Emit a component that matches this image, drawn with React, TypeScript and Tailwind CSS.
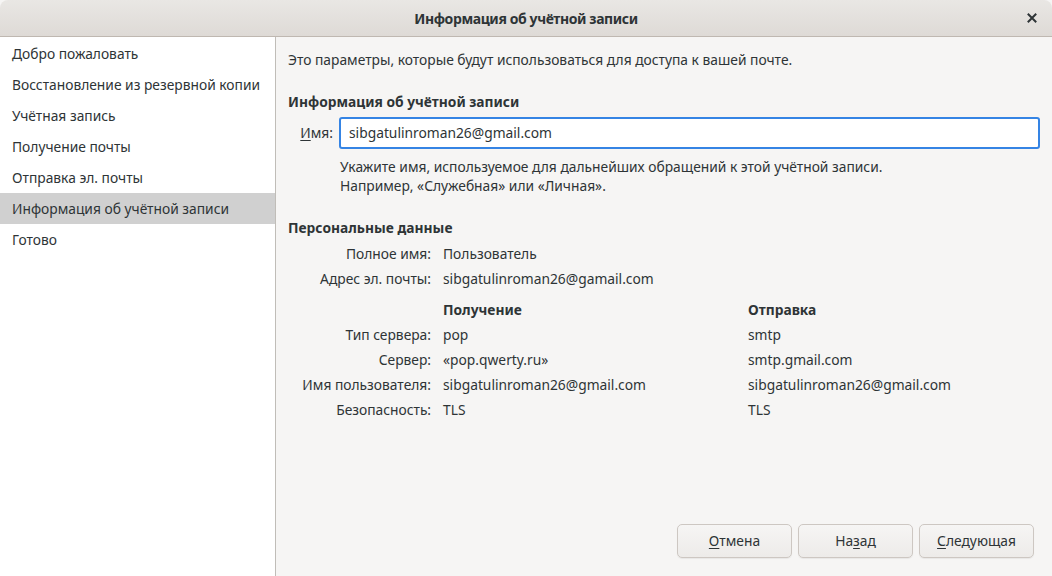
import React from "react";

const font = { fontFamily: '"Noto Sans", "Open Sans", sans-serif' };

function U({ c }: { c: string }) {
  return <span className="underline underline-offset-2">{c}</span>;
}

const side = [
  "Добро пожаловать",
  "Восстановление из резервной копии",
  "Учётная запись",
  "Получение почты",
  "Отправка эл. почты",
  "Информация об учётной записи",
  "Готово",
];

function Row({ a, b, c }: { a: string; b: string; c: string }) {
  return (
    <>
      <div className="h-[25px] flex items-center justify-end">{a}</div>
      <div className="h-[25px] flex items-center">{b}</div>
      <div className="h-[25px] flex items-center">{c}</div>
    </>
  );
}

export default function App() {
  return (
    <div
      className="w-[1052px] h-[576px] flex flex-col overflow-hidden text-[13.8px] text-[#2e3436] bg-[#f6f5f4]"
      style={font}
    >
      <div className="h-[37px] shrink-0 flex items-center justify-center relative rounded-t-[8px] bg-gradient-to-b from-[#e9e7e4] to-[#dedad6] border-b border-[#bfb8b1]">
        <span className="font-bold text-[14px] tracking-[-0.4px]">Информация об учётной записи</span>
        <svg className="absolute right-[15px] top-[13px]" width="10" height="10" viewBox="0 0 10 10">
          <path d="M1.5 1.5 L8.5 8.5 M8.5 1.5 L1.5 8.5" stroke="#2e3436" strokeWidth="2" strokeLinecap="square" />
        </svg>
      </div>
      <div className="flex-1 flex min-h-0">
        <div className="w-[276px] shrink-0 bg-white border-r border-[#c0bdb8] pt-px">
          {side.map((s, i) => (
            <div
              key={s}
              className={`h-[31px] flex items-center pl-3 pt-[2px] ${i === 5 ? "bg-[#d0d0d0]" : ""}`}
            >
              {s}
            </div>
          ))}
        </div>
        <div className="flex-1 flex flex-col px-3 pt-[13px]">
          <div className="h-[20px] flex items-center">
            Это параметры, которые будут использоваться для доступа к вашей почте.
          </div>
          <div className="h-[20px] flex items-center mt-[22px] font-bold">Информация об учётной записи</div>
          <div className="flex items-center mt-[5px]">
            <div className="w-[51px] text-right pr-[6px]">
              <U c="И" />мя:
            </div>
            <div className="flex-1 h-[32px] flex items-center bg-white border-2 border-[#3584e4] rounded-[3px] pl-[8px]">
              sibgatulinroman26@gmail.com
            </div>
          </div>
          <div className="pl-[52px] mt-[8px] leading-[19px]">
            <div>Укажите имя, используемое для дальнейших обращений к этой учётной записи.</div>
            <div>Например, «Служебная» или «Личная».</div>
          </div>
          <div className="h-[20px] flex items-center mt-[23px] font-bold">Персональные данные</div>
          <div className="grid grid-cols-[143px_293px_1fr] gap-x-[12px] mt-[3.5px]">
            <Row a="Полное имя:" b="Пользователь" c="" />
            <Row a="Адрес эл. почты:" b="sibgatulinroman26@gamail.com" c="" />
            <div className="h-[6px] col-span-3" />
            <div className="h-[25px]" />
            <div className="h-[25px] flex items-center font-bold">Получение</div>
            <div className="h-[25px] flex items-center font-bold">Отправка</div>
            <Row a="Тип сервера:" b="pop" c="smtp" />
            <Row a="Сервер:" b="«pop.qwerty.ru»" c="smtp.gmail.com" />
            <Row a="Имя пользователя:" b="sibgatulinroman26@gmail.com" c="sibgatulinroman26@gmail.com" />
            <Row a="Безопасность:" b="TLS" c="TLS" />
          </div>
          <div className="flex-1" />
          <div className="flex justify-end gap-[6px] pr-[6px] mb-[18px]">
            {[
              <><U c="О" />тмена</>,
              <>На<U c="з" />ад</>,
              <><U c="С" />ледующая</>,
            ].map((l, i) => (
              <div
                key={i}
                className="w-[115px] h-[34px] flex items-center justify-center rounded-[5px] border border-[#cdc7c2] bg-gradient-to-b from-[#f6f5f4] to-[#edebe9] shadow-[0_1px_1px_rgba(0,0,0,0.06)]"
              >
                {l}
              </div>
            ))}
          </div>
        </div>
      </div>
    </div>
  );
}
